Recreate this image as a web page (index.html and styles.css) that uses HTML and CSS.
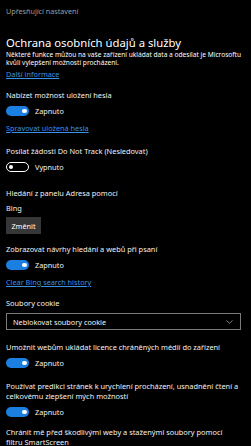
FILE: index.html
```html
<!DOCTYPE html>
<html lang="cs">
<head>
<meta charset="utf-8">
<title>Upřesňující nastavení</title>
<link rel="stylesheet" href="styles.css">
</head>
<body>
<div class="page">
  <div class="title">Upřesňující nastavení</div>
  <h1 class="heading">Ochrana osobních údajů a služby</h1>
  <p class="desc">Některé funkce můžou na vaše zařízení ukládat data a odesílat je Microsoftu kvůli vylepšení možností procházení.</p>
  <a class="link l-first">Další informace</a>

  <div class="label g-sec1">Nabízet možnost uložení hesla</div>
  <div class="toggle-row"><span class="toggle on"><span class="knob"></span></span><span class="state">Zapnuto</span></div>
  <a class="link">Spravovat uložená hesla</a>

  <div class="label g-sec">Posílat žádosti Do Not Track (Nesledovat)</div>
  <div class="toggle-row"><span class="toggle off"><span class="knob"></span></span><span class="state">Vypnuto</span></div>

  <div class="label g-sec-lg">Hledání z panelu Adresa pomocí</div>
  <div class="label g-small">Bing</div>
  <button class="btn">Změnit</button>

  <div class="label g-btn">Zobrazovat návrhy hledání a webů při psaní</div>
  <div class="toggle-row"><span class="toggle on"><span class="knob"></span></span><span class="state">Zapnuto</span></div>
  <a class="link">Clear Bing search history</a>

  <div class="label g-sec1">Soubory cookie</div>
  <div class="select"><span>Neblokovat soubory cookie</span>
    <svg class="chev" width="7" height="4" viewBox="0 0 7 4"><path d="M0.5 0.5 L3.5 3.3 L6.5 0.5" fill="none" stroke="#9a9a9a" stroke-width="0.8"/></svg>
  </div>

  <div class="label g-sel">Umožnit webům ukládat licence chráněných médií do zařízení</div>
  <div class="toggle-row"><span class="toggle on"><span class="knob"></span></span><span class="state">Zapnuto</span></div>

  <div class="label g-sec">Používat predikci stránek k urychlení procházení, usnadnění čtení a celkovému zlepšení mých možností</div>
  <div class="toggle-row"><span class="toggle on"><span class="knob"></span></span><span class="state">Zapnuto</span></div>

  <div class="label g-sec1 narrow">Chránit mě před škodlivými weby a staženými soubory pomocí filtru SmartScreen</div>
</div>
</body>
</html>
```
FILE: styles.css
```css
html, body {
  margin: 0;
  padding: 0;
  background: #000;
}
body {
  width: 251px;
  height: 446px;
  overflow: hidden;
  font-family: "Noto Sans", "Open Sans", sans-serif;
  color: #f2f2f2;
}
.page {
  padding: 6px 6px 0 6px;
  display: flex;
  flex-direction: column;
  align-items: flex-start;
}
.title {
  font-size: 7.2px;
  line-height: 10px;
  color: #9c9c9c;
}
.heading {
  margin: 19px 0 0 0;
  font-size: 11.3px;
  line-height: 16px;
  font-weight: normal;
  color: #fff;
}
.desc {
  margin: 0;
  font-size: 6.6px;
  line-height: 8px;
  color: #fff;
  width: 236px;
}
.link {
  display: block;
  margin-top: 7px;
  font-size: 7.3px;
  line-height: 10px;
  color: #3a92e4;
  text-decoration: underline;
  text-underline-offset: 1px;
}
.link.l-first { margin-top: 2px; }
.label {
  font-size: 7.4px;
  line-height: 10px;
  color: #f2f2f2;
  width: 238px;
}
.label.narrow { width: 225px; line-height: 9.5px; }
.g-sec1 { margin-top: 11px; }
.g-sec { margin-top: 13px; }
.g-sec-lg { margin-top: 16px; }
.g-small { margin-top: 5px; }
.g-btn { margin-top: 10px; }
.g-sel { margin-top: 12px; }
.toggle-row {
  margin-top: 6px;
  display: flex;
  align-items: center;
  height: 10px;
}
.toggle {
  box-sizing: border-box;
  width: 23px;
  height: 10px;
  border-radius: 5px;
  display: flex;
  align-items: center;
  padding: 0 2.5px;
}
.toggle.on {
  background: #1a7fe0;
  justify-content: flex-end;
}
.toggle.off {
  border: 1px solid #fff;
  justify-content: flex-start;
  padding: 0 1.5px;
}
.knob {
  width: 4.5px;
  height: 4.5px;
  border-radius: 50%;
  background: #fff;
}
.state {
  margin-left: 6px;
  font-size: 7.3px;
  line-height: 10px;
  color: #f2f2f2;
}
.btn {
  margin-top: 4px;
  width: 35px;
  height: 17px;
  padding: 0;
  border: none;
  background: #363636;
  color: #fff;
  font-family: inherit;
  font-size: 7.3px;
}
.select {
  margin-top: 5px;
  box-sizing: border-box;
  width: 235px;
  height: 17px;
  border: 1px solid #7a7a7a;
  display: flex;
  align-items: center;
  justify-content: space-between;
  padding: 0 7px 0 6px;
  font-size: 7.3px;
  color: #f2f2f2;
}
.chev { display: block; }
```
